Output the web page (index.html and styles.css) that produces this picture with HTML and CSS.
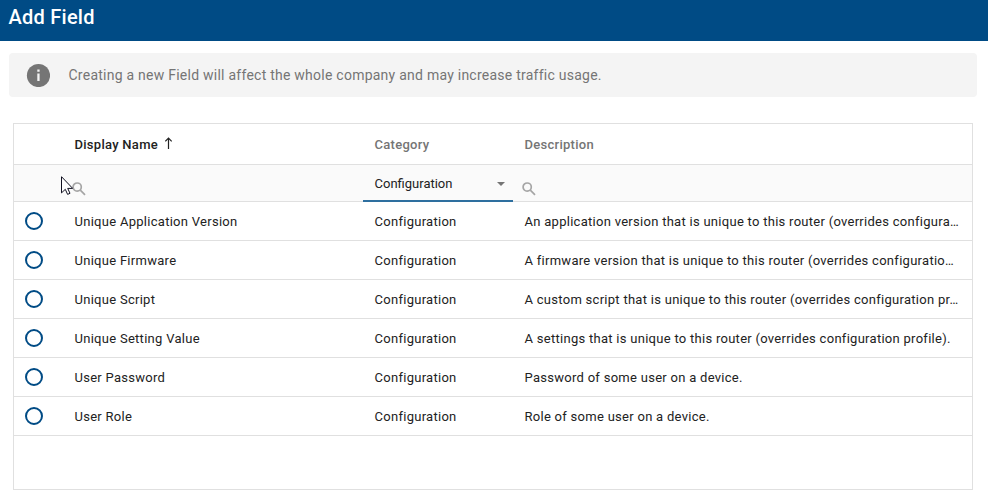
FILE: index.html
```html
<!DOCTYPE html>
<html lang="en">
<head>
<meta charset="utf-8">
<title>Add Field</title>
<link rel="stylesheet" href="styles.css">
</head>
<body>
<header class="titlebar"><h1>Add Field</h1></header>
<div class="notice">
  <svg class="info" viewBox="0 0 24 24"><circle cx="12.5" cy="12.5" r="11.6" fill="#757575"/><path d="M11.3 6.4h2.3v2.3h-2.3zM11.3 10.6h2.3v7.4h-2.3z" fill="#f4f4f4"/></svg>
  <span>Creating a new Field will affect the whole company and may increase traffic usage.</span>
</div>
<div class="grid">
  <div class="row head">
    <span></span>
    <span class="cell sorted">Display Name<svg class="arrow" viewBox="0 0 8 12"><path d="M3.5 12V1.2M.3 4.3l3.2-3.2 3.2 3.2" fill="none" stroke="#222" stroke-width="1.2"/></svg></span>
    <span class="cell">Category</span>
    <span class="cell">Description</span>
  </div>
  <div class="row filter">
    <span></span>
    <span class="search"><svg viewBox="0 0 14 14"><circle cx="5.2" cy="5.1" r="4.1"/><path d="M8.3 8.2 13 12.9"/></svg></span>
    <span class="select">Configuration<i class="caret"></i></span>
    <span class="search"><svg viewBox="0 0 14 14"><circle cx="5.2" cy="5.1" r="4.1"/><path d="M8.3 8.2 13 12.9"/></svg></span>
  </div>
  <div class="row"><i class="radio"></i><span class="cell">Unique Application Version</span><span class="cell">Configuration</span><span class="cell">An application version that is unique to this router (overrides configura…</span></div>
  <div class="row"><i class="radio"></i><span class="cell">Unique Firmware</span><span class="cell">Configuration</span><span class="cell">A firmware version that is unique to this router (overrides configuratio…</span></div>
  <div class="row"><i class="radio"></i><span class="cell">Unique Script</span><span class="cell">Configuration</span><span class="cell">A custom script that is unique to this router (overrides configuration pr…</span></div>
  <div class="row"><i class="radio"></i><span class="cell">Unique Setting Value</span><span class="cell">Configuration</span><span class="cell">A settings that is unique to this router (overrides configuration profile).</span></div>
  <div class="row"><i class="radio"></i><span class="cell">User Password</span><span class="cell">Configuration</span><span class="cell">Password of some user on a device.</span></div>
  <div class="row"><i class="radio"></i><span class="cell">User Role</span><span class="cell">Configuration</span><span class="cell">Role of some user on a device.</span></div>
</div>
<svg class="pointer" viewBox="0 0 12 19"><path d="M.5.7v16.2l3.8-3.6 2.3 5.1 2.4-1.1-2.3-4.9h5z" fill="#fff" stroke="#101020" stroke-width="1"/></svg>
</body>
</html>
```
FILE: styles.css
```css
* { box-sizing: border-box; }
body {
  margin: 0;
  height: 493px;
  overflow: hidden;
  background: #fff;
  color: #222;
  font: 13px/20px Roboto, sans-serif;
  letter-spacing: 0.28px;
}
.titlebar {
  height: 41px;
  padding: 5px 8.5px;
  background: #004b85;
  color: #fff;
}
h1 {
  margin: 0;
  font-size: 20px;
  line-height: 24px;
  font-weight: 500;
  letter-spacing: 0.25px;
}
.notice {
  display: flex;
  align-items: center;
  gap: 18.5px;
  height: 44px;
  margin: 12px 11px 0 9px;
  padding-left: 17px;
  border-radius: 4px;
  background: #f4f4f4;
  color: #757575;
  font-size: 14px;
  letter-spacing: 0.245px;
}
.info { width: 24px; height: 24px; }
.grid {
  width: 960px;
  height: 367px;
  margin: 26px 0 0 13px;
  border: 1px solid #e0e0e0;
}
.row {
  display: grid;
  grid-template-columns: 49px 300px 150px 1fr;
  align-items: center;
  height: 39px;
  border-bottom: 1px solid #e0e0e0;
}
.cell {
  padding: 2px 0 0 11.5px;
  white-space: nowrap;
}
.head {
  height: 41px;
  color: #757575;
  font-weight: 500;
}
.sorted { color: #222; }
.arrow { width: 8px; height: 12px; margin-left: 6.5px; }
.filter {
  height: 37px;
  background: #fafafa;
}
.search { padding: 10px 0 0 9px; line-height: 0; }
.search svg {
  width: 14px;
  height: 14px;
  fill: none;
  stroke: #a5a5a5;
  stroke-width: 1.7;
}
.select {
  display: flex;
  align-items: center;
  justify-content: space-between;
  height: 37px;
  padding: 2px 8px 0 11.5px;
  border-bottom: 2px solid #2e6f9f;
  letter-spacing: 0;
  align-self: start;
}
.caret {
  border: 4px solid transparent;
  border-top-color: #757575;
  border-bottom: 0;
}
.radio {
  width: 18px;
  height: 18px;
  margin-left: 11px;
  border: 2px solid #004b85;
  border-radius: 50%;
}
.pointer {
  position: absolute;
  left: 61px;
  top: 176px;
  width: 12px;
  height: 19px;
}
```
